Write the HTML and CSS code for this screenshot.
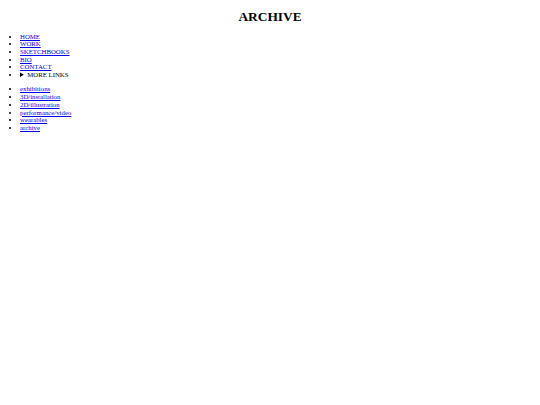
FILE: index.html
```html
<!DOCTYPE html>
<html>
<head>
<meta charset="utf-8">
<link rel="stylesheet" href="styles.css">
</head>
<body class="page">
<h1 class="title">ARCHIVE</h1>
<ul class="nav">
  <li><a href="#">HOME</a></li>
  <li><a href="#">WORK</a></li>
  <li><a href="#">SKETCHBOOKS</a></li>
  <li><a href="#">BIO</a></li>
  <li><a href="#">CONTACT</a></li>
  <li><details class="more"><summary>MORE LINKS</summary></details></li>
</ul>
<ul class="nav">
  <li><a href="#">exhibitions</a></li>
  <li><a href="#">3D/installation</a></li>
  <li><a href="#">2D/illustration</a></li>
  <li><a href="#">performance/video</a></li>
  <li><a href="#">wearables</a></li>
  <li><a href="#">archive</a></li>
</ul>
</body>
</html>
```
FILE: styles.css
```css
html { background: #fff; }
.page {
  margin: 0;
  padding: 0 3.33px;
  font-family: "Liberation Serif", "Times New Roman", serif;
  font-size: 6.8px;
  line-height: 7.7px;
  color: #000;
}
.title {
  font-size: 13.4px;
  line-height: 15.33px;
  margin: 8.6px 0;
  text-align: center;
  font-weight: bold;
}
.nav {
  margin: 6.67px 0;
  padding-left: 16.67px;
  list-style: disc;
}
.nav li { line-height: 7.7px; }
.nav a { color: #0000ee; text-decoration: underline; }
.more summary { cursor: default; }
```
